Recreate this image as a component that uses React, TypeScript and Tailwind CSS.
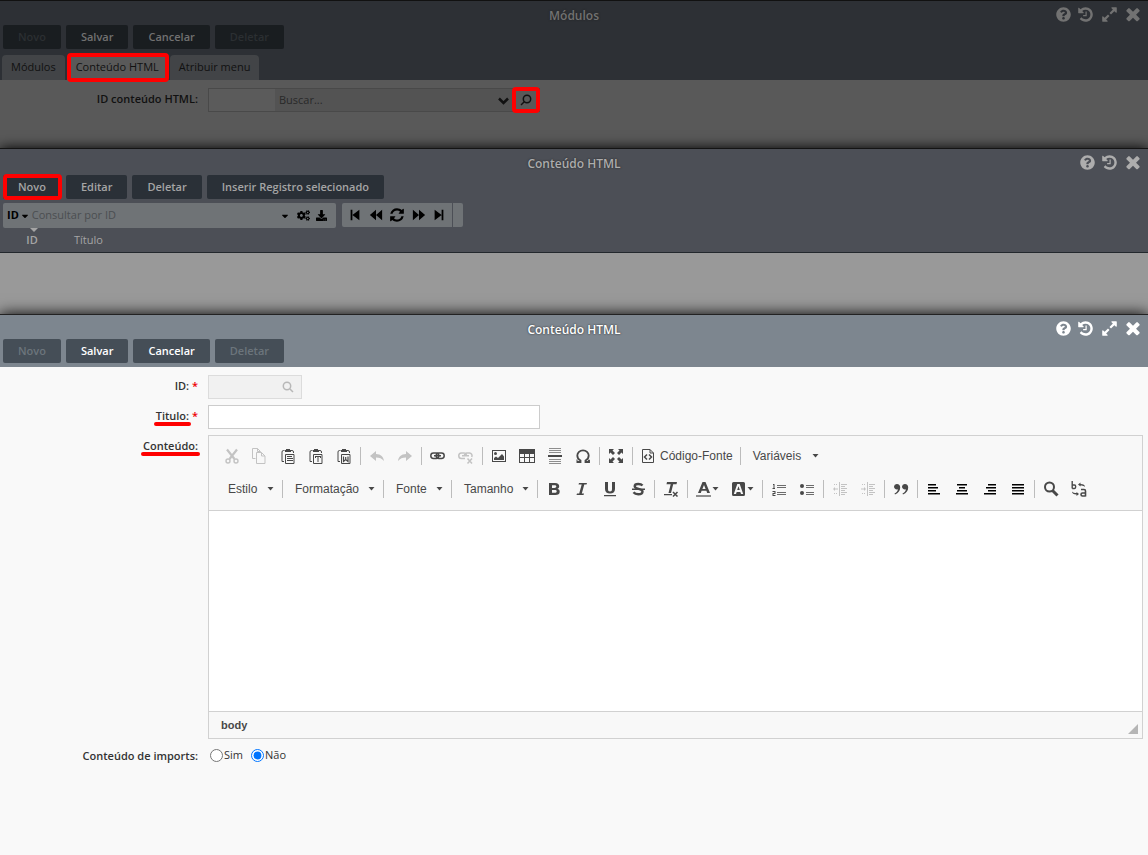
import type { ReactNode } from "react";
import { FaCogs, FaDownload, FaQuestionCircle, FaCaretDown } from "react-icons/fa";

type IconProps = {
  children: ReactNode;
  className?: string;
};

function Icon({ children, className = "" }: IconProps) {
  return (
    <svg
      viewBox="0 0 16 16"
      width="16"
      height="16"
      fill="currentColor"
      aria-hidden="true"
      className={"shrink-0 " + className}
    >
      {children}
    </svg>
  );
}

function WindowIcon({ d, className }: { d: string; className?: string }) {
  return (
    <svg
      viewBox="0 0 1792 1792"
      fill="currentColor"
      aria-hidden="true"
      className={className || "size-4"}
    >
      <path d={d} />
    </svg>
  );
}

const HISTORY =
  "M1664 896q0 156-61 298t-164 245-245 164-298 61q-172 0-327-72.5t-264-204.5q-7-10-6.5-22.5t8.5-20.5l137-138q10-9 25-9 16 2 23 12 73 95 179 147t225 52q104 0 198.5-40.5t163.5-109.5 109.5-163.5 40.5-198.5-40.5-198.5-109.5-163.5-163.5-109.5-198.5-40.5q-98 0-188 35.5t-160 101.5l137 138q31 30 14 69-17 40-59 40h-448q-26 0-45-19t-19-45v-448q0-42 40-59 39-17 69 14l130 129q107-101 244.5-156.5t284.5-55.5q156 0 298 61t245 164 164 245 61 298zm-640-288v448q0 14-9 23t-23 9h-320q-14 0-23-9t-9-23v-64q0-14 9-23t23-9h224v-352q0-14 9-23t23-9h64q14 0 23 9t9 23z";
const EXPAND =
  "M883 1056q0 13-10 23l-332 332 144 144q19 19 19 45t-19 45-45 19h-448q-26 0-45-19t-19-45v-448q0-26 19-45t45-19 45 19l144 144 332-332q10-10 23-10t23 10l114 114q10 10 10 23zm781-864v448q0 26-19 45t-45 19-45-19l-144-144-332 332q-10 10-23 10t-23-10l-114-114q-10-10-10-23t10-23l332-332-144-144q-19-19-19-45t19-45 45-19h448q26 0 45 19t19 45z";
const CLOSE =
  "M1490 1322q0 40-28 68l-136 136q-28 28-68 28t-68-28l-294-294-294 294q-28 28-68 28t-68-28l-136-136q-28-28-28-68t28-68l294-294-294-294q-28-28-28-68t28-68l136-136q28-28 68-28t68 28l294 294 294-294q28-28 68-28t68 28l136 136q28 28 28 68t-28 68l-294 294 294 294q28 28 28 68z";
const REFRESH =
  "M1639 1056q0 5-1 7-64 268-268 434.5t-478 166.5q-146 0-282.5-55t-243.5-157l-129 129q-19 19-45 19t-45-19-19-45v-448q0-26 19-45t45-19h448q26 0 45 19t19 45-19 45l-137 137q71 66 161 102t187 36q134 0 250-65t186-179q11-17 53-117 8-23 30-23h192q13 0 22.5 9.5t9.5 22.5zm25-800v448q0 26-19 45t-45 19h-448q-26 0-45-19t-19-45 19-45l138-138q-148-137-349-137-134 0-250 65t-186 179q-11 17-53 117-8 23-30 23h-199q-13 0-22.5-9.5t-9.5-22.5v-7q65-268 270-434.5t480-166.5q146 0 284 55.5t245 156.5l130-129q19-19 45-19t45 19 19 45z";

// red frame drawn around a highlighted control
function Highlight({ inset }: { inset: string }) {
  return (
    <span
      className={"pointer-events-none absolute z-10 rounded-sm border-4 border-[#ff0000] " + inset}
    />
  );
}

type TitleBarProps = {
  title: string;
  expand?: boolean;
  color: string;
};

function TitleBar({ title, expand = true, color }: TitleBarProps) {
  return (
    <div className={"grid h-6 grid-cols-[1fr_auto_1fr] items-end " + color}>
      <h2 className="col-start-2 text-xs leading-[18px] font-semibold [text-shadow:0_0_2px_#222]">
        {title}
      </h2>
      <div className="flex h-[22px] items-center justify-end pr-[5px]">
        <button type="button" aria-label="Ajuda" className="pr-[6px]">
          <FaQuestionCircle className="size-[15px]" />
        </button>
        <button type="button" aria-label="Histórico">
          <WindowIcon d={HISTORY} className="size-[17px]" />
        </button>
        {expand && (
          <button type="button" aria-label="Expandir" className="pl-[7px]">
            <WindowIcon d={EXPAND} className="size-[17px]" />
          </button>
        )}
        <button type="button" aria-label="Fechar" className="pl-[5px]">
          <WindowIcon d={CLOSE} className="size-5" />
        </button>
      </div>
    </div>
  );
}

type ActionProps = {
  children: ReactNode;
  tone: string;
  disabled?: boolean;
  marked?: boolean;
};

function Action({ children, tone, disabled, marked }: ActionProps) {
  return (
    <button
      type="button"
      disabled={disabled}
      className={"relative h-6 rounded-xs px-[15px] text-[11px] leading-6 font-semibold " + tone}
    >
      {children}
      {marked && <Highlight inset="-right-px left-0 -inset-y-px" />}
    </button>
  );
}

type ToolProps = {
  label: string;
  children: ReactNode;
  disabled?: boolean;
  arrow?: boolean;
  black?: boolean;
};

function Tool({ label, children, disabled, arrow, black }: ToolProps) {
  let color = "text-[#484848]";
  if (disabled) color = "text-[#c3c3c3]";
  if (black) color = "text-black";

  return (
    <button
      type="button"
      aria-label={label}
      disabled={disabled}
      className={"flex h-7 items-center px-[6px] " + color}
    >
      <Icon>{children}</Icon>
      {arrow && <Arrow />}
    </button>
  );
}

function Arrow() {
  return (
    <svg viewBox="0 0 7 4" width="7" height="4" fill="#484848" aria-hidden="true">
      <path d="M.5 0h6L3.500 3.500z" />
    </svg>
  );
}

function Combo({ label, width }: { label: string; width: string }) {
  return (
    <button
      type="button"
      className={"flex h-7 items-center justify-between pr-[6px] pl-[10px] text-[#484848] " + width}
    >
      {label}
      <Arrow />
    </button>
  );
}

function Sep() {
  return <span className="mx-[2px] h-[18px] w-px bg-[#bcbcbc]" />;
}

function Clipboard({ children }: { children: ReactNode }) {
  return (
    <>
      <path d="M4.500 2.500h-1a1.500 1.500 0 0 0-1.500 1.500v9.500h2M11 2.500h1a1.500 1.500 0 0 1 1.500 1.500v1" fill="none" stroke="currentColor" />
      <path d="M5 2h1V1h4v1h1v2H5z" />
      <path d="M5.500 6.500h8.500v9H5.500z" fill="none" stroke="currentColor" />
      {children}
    </>
  );
}

function Editor() {
  return (
    <div className="min-w-0 flex-1 border border-[#d1d1d1] bg-white font-['Liberation_Sans',Arial,sans-serif] text-xs">
      <div className="border-b border-[#d1d1d1] bg-[#f8f8f8] pt-[6px] pb-[7px] pl-[9px]">
        <div className="mb-[5px] flex flex-wrap items-center">
          <Tool label="Recortar" disabled>
            <path d="M3 1.500 10.500 11M13 1.500 5.500 11" stroke="currentColor" strokeWidth="2.200" />
            <circle cx="4" cy="13" r="2" fill="none" stroke="currentColor" strokeWidth="1.400" />
            <circle cx="12" cy="13" r="2" fill="none" stroke="currentColor" strokeWidth="1.400" />
          </Tool>
          <Tool label="Copiar" disabled>
            <path d="M3.500 10.500h-3v-10h5l3 3M5.500.5v3h3M4.500 4.500h5l3.500 3.500v7.500H4.500zM9.500 4.500V8H13" fill="none" stroke="currentColor" />
          </Tool>
          <Tool label="Colar">
            <Clipboard>
              <path d="M7 8h5v1H7zM7 10h6v1H7zM7 12h6v1H7z" />
            </Clipboard>
          </Tool>
          <Tool label="Colar como texto sem formatação">
            <Clipboard>
              <path d="M7 8h6v2h-1V9h-1.500v5h-1V9H8v1H7z" />
            </Clipboard>
          </Tool>
          <Tool label="Colar do Word">
            <Clipboard>
              <path d="M7.500 8.500v5l2.200-2 2.300 2v-5M9.700 9v3" fill="none" stroke="currentColor" strokeWidth="1.200" />
            </Clipboard>
          </Tool>
          <Sep />
          <Tool label="Desfazer" disabled>
            <path d="M7 3v3c5 0 7.500 3 8 7-2-2.500-4.500-3.500-8-3.500V13L1 8z" />
          </Tool>
          <Tool label="Refazer" disabled>
            <path d="M9 3v3c-5 0-7.500 3-8 7 2-2.500 4.500-3.500 8-3.500V13l6-5z" />
          </Tool>
          <Sep />
          <Tool label="Inserir link">
            <g fill="none" stroke="currentColor" strokeWidth="1.500">
              <rect x="0.800" y="5" width="8" height="5.500" rx="2.700" />
              <rect x="6.200" y="5" width="8" height="5.500" rx="2.700" />
              <path d="M4 7.750h7" />
            </g>
          </Tool>
          <Tool label="Remover link" disabled>
            <g fill="none" stroke="currentColor" strokeWidth="1.500">
              <path d="M7 10.500H3.500a2.700 2.700 0 0 1 0-5.500H6a2.500 2.500 0 0 1 2.500 2M6.500 7.750A2.700 2.700 0 0 1 9 5h2.500a2.700 2.700 0 0 1 2.200 4M4 7.750h7" />
              <path d="m9.500 10.500 4.500 5M14 10.500l-4.500 5" />
            </g>
          </Tool>
          <Sep />
          <Tool label="Imagem">
            <path fillRule="evenodd" d="M1 2h14v12H1zM2 3v10h12V3z" />
            <circle cx="4.500" cy="5.500" r="1.500" />
            <path d="m3 12v-2l2-1.500 2 1.500 4-4 2 2.500V12z" />
          </Tool>
          <Tool label="Tabela">
            <path fillRule="evenodd" d="M0 1h16v14H0zM1 6v3h4V6zM6 6v3h4V6zM11 6v3h4V6zM1 10v4h4v-4zM6 10v4h4v-4zM11 10v4h4v-4z" />
          </Tool>
          <Tool label="Linha horizontal">
            <path d="M2 0h12v1H2zM2 2h12v1H2zM2 4h12v1H2zM2 11h12v1H2zM2 13h12v1H2zM2 15h12v1H2z" opacity=".6" />
            <path d="M1 7h14v2H1z" />
          </Tool>
          <Tool label="Caractere especial">
            <path d="M2 14h3.500v-1.500C3.500 11.500 2.300 9.600 2.300 7.500a5.700 5.200 0 0 1 11.400 0c0 2.100-1.200 4-3.200 5V14H14v-2" fill="none" stroke="currentColor" strokeWidth="1.800" />
            <path d="M1.500 11.500h1V15h-1zM13.500 11.500h1V15h-1z" />
          </Tool>
          <Sep />
          <Tool label="Maximizar">
            <path d="M1 1h5L4.500 2.500 7 5 5 7 2.500 4.500 1 6zM15 1h-5l1.500 1.500L9 5l2 2 2.500-2.500L15 6zM1 15h5l-1.500-1.500L7 11 5 9l-2.500 2.500L1 10zM15 15h-5l1.500-1.500L9 11l2-2 2.500 2.500L15 10z" />
          </Tool>
          <Sep />
          <button type="button" className="flex h-7 items-center gap-1 px-[5px] text-[#484848]">
            <Icon>
              <path d="M2.500 1.500h7.500l3.500 3.500v9.500h-11zM10 1.500V5h3.500" fill="none" stroke="currentColor" />
              <path d="M7 6.500 4.500 9l2.500 2.500M9 6.500 11.500 9 9 11.500" fill="none" stroke="currentColor" strokeWidth="1.500" />
            </Icon>
            Código-Fonte
          </button>
          <Sep />
          <Combo label="Variáveis" width="w-[82px]" />
        </div>

        <div className="flex flex-wrap items-center">
          <Combo label="Estilo" width="w-[62px]" />
          <Sep />
          <Combo label="Formatação" width="w-24" />
          <Sep />
          <Combo label="Fonte" width="w-[63px]" />
          <Sep />
          <Combo label="Tamanho" width="w-[81px]" />
          <Sep />
          <Tool label="Negrito">
            <path fillRule="evenodd" d="M3 2h6c3 0 4.200 1.300 4.200 3.200 0 1.300-.7 2.200-1.800 2.600 1.500.4 2.300 1.400 2.300 2.900 0 2.100-1.500 3.300-4.400 3.300H3zM6 4.200V7h2.300c1.300 0 2-.5 2-1.400s-.7-1.400-2-1.400zM6 9v2.800h2.700c1.300 0 2-.5 2-1.400S10 9 8.700 9z" />
          </Tool>
          <Tool label="Itálico">
            <path d="M5 2h8l-.5 1.500h-2.200L7.800 12.500h2.200L9.500 14H2.500l.5-1.500h2.200L7.700 3.500H4.500z" />
          </Tool>
          <Tool label="Sublinhado">
            <path d="M3 1h3v7c0 1.800.7 2.500 2 2.500s2-.7 2-2.500V1h3v7c0 3-2 4.500-5 4.500S3 11 3 8zM2 14h12v1.200H2z" />
          </Tool>
          <Tool label="Tachado">
            <path d="M12.500 4.500C11.500 3.300 10 3 8.200 3 6 3 4.700 3.800 4.700 5.200c0 3.600 7.800 1.600 7.800 5.300 0 1.700-1.700 2.700-4.200 2.700-2 0-3.700-.6-4.800-2" fill="none" stroke="currentColor" strokeWidth="2.400" />
            <path d="M2 7.500h13V9H2z" />
          </Tool>
          <Sep />
          <Tool label="Remover formatação">
            <path d="M4 1h10l-.5 2.200h-3.300L8 12H5.500l2.200-8.800H3.500zM1 13h8v1.200H1z" />
            <path d="m10 11 4.500 4.500M14.500 11 10 15.500" stroke="currentColor" strokeWidth="1.500" />
          </Tool>
          <Sep />
          <Tool label="Cor do texto" arrow>
            <path fillRule="evenodd" d="M6.500 1h3L14 12h-2.800l-.8-2.200H5.600L4.800 12H2zM8 4 6.400 8h3.200z" />
            <path d="M0 14h15v2H0z" opacity=".6" />
          </Tool>
          <Tool label="Cor do fundo" arrow>
            <path fillRule="evenodd" d="M2.500 1h10A1.500 1.500 0 0 1 14 2.500v11a1.500 1.500 0 0 1-1.500 1.500h-10A1.500 1.500 0 0 1 1 13.500v-11A1.500 1.500 0 0 1 2.500 1zM6.300 3 2.800 13h2.200l.7-2h3.600l.7 2h2.200L8.700 3zM7.500 5.200 8.800 9H6.200z" />
          </Tool>
          <Sep />
          <Tool label="Lista numerada">
            <path d="M6 4h9v1H6zM6 6h9v1H6zM6 11h9v1H6zM6 13h9v1H6z" opacity=".8" />
            <path d="M2 3h1.500v4H4v1H1.500V7h1V4H2zM1.500 10H4.500v3h-2v1h2v1h-3v-3h2v-1h-2z" />
          </Tool>
          <Tool label="Lista sem números">
            <circle cx="3" cy="5" r="2" />
            <circle cx="3" cy="12" r="2" />
            <path d="M7 4h8v1H7zM7 6h8v1H7zM7 11h8v1H7zM7 13h8v1H7z" opacity=".8" />
          </Tool>
          <Sep />
          <Tool label="Diminuir recuo" disabled>
            <path d="M7 1h1v14H7zM9 3h6v1H9zM9 5h4v1H9zM9 7h6v1H9zM9 9h4v1H9zM9 11h6v1H9zM9 13h4v1H9zM2 3h1v1H2zM4 3h1v1H4zM2 12h1v1H2zM4 12h1v1H4zM1 8l2-2v1.500h3v1H3V10z" />
          </Tool>
          <Tool label="Aumentar recuo" disabled>
            <path d="M7 1h1v14H7zM9 3h6v1H9zM9 5h4v1H9zM9 7h6v1H9zM9 9h4v1H9zM9 11h6v1H9zM9 13h4v1H9zM2 3h1v1H2zM4 3h1v1H4zM2 12h1v1H2zM4 12h1v1H4zM6 8 4 6v1.500H1v1h3V10z" />
          </Tool>
          <Sep />
          <Tool label="Citação">
            <path d="M1 5.500A2.800 2.800 0 0 1 4 3c2 0 3.200 1.300 3.200 3.500C7.200 9.500 5.500 12 2 13.500l-.5-1C3.500 11.500 4.700 10.200 5 8.300 2.800 9 1 7.500 1 5.500zM9 5.500A2.800 2.800 0 0 1 12 3c2 0 3.200 1.300 3.200 3.500 0 3-1.700 5.500-5.200 7l-.5-1c2-1 3.200-2.300 3.500-4.200-2.200.7-4-.8-4-2.800z" />
          </Tool>
          <Sep />
          <Tool label="Alinhar à esquerda" black>
            <path d="M2 3h8v1.600H2zM2 6h10v1.600H2zM2 9h8v1.600H2zM2 12h12v1.600H2z" />
          </Tool>
          <Tool label="Centralizar" black>
            <path d="M3 3h10v1.600H3zM5 6h6v1.600H5zM3 9h10v1.600H3zM2 12h12v1.600H2z" />
          </Tool>
          <Tool label="Alinhar à direita" black>
            <path d="M6 3h8v1.600H6zM4 6h10v1.600H4zM6 9h8v1.600H6zM2 12h12v1.600H2z" />
          </Tool>
          <Tool label="Justificado" black>
            <path d="M2 3h12v1.600H2zM2 6h12v1.600H2zM2 9h12v1.600H2zM2 12h12v1.600H2z" />
          </Tool>
          <Sep />
          <Tool label="Localizar">
            <circle cx="6.500" cy="6" r="4.500" fill="none" stroke="currentColor" strokeWidth="2" />
            <path d="m9.500 9.500 5 5" stroke="currentColor" strokeWidth="3" />
          </Tool>
          <Tool label="Substituir">
            <path d="M1.200 0v7.500M1.200 4h2.300q1.200 0 1.200 1.700T3.500 7.500H1.200" fill="none" stroke="currentColor" strokeWidth="1.400" />
            <path d="M10 8.500h3q1.500 0 1.500 1.500v5.500M14.500 12h-3q-1.500 0-1.500 1.500t1.500 1.500h3" fill="none" stroke="currentColor" strokeWidth="1.600" />
            <path d="m7 3.500 2.500-2V3c3 0 4.500 1 4.500 3-1-1-2.500-1.500-4.500-1.500v1zM8 13l-2.500 2v-1.500C2.500 13.500 1 12.500 1 10.500 2 11.500 3.500 12 5.500 12v-1z" />
          </Tool>
        </div>
      </div>

      <textarea
        id="conteudo"
        className="block h-[200px] w-full resize-none p-5 outline-none"
      />

      <div className="flex h-[27px] items-center justify-between border-t border-[#d1d1d1] bg-[#f8f8f8] pl-3 text-[11px] font-bold text-[#484848]">
        body
        <svg viewBox="0 0 10 10" className="mr-1 mb-1 size-[10px] self-end" fill="#b5b5b5" aria-hidden="true">
          <path d="M10 0v10H0z" />
        </svg>
      </div>
    </div>
  );
}

const labelClass =
  "w-[198px] shrink-0 text-right text-[11px] leading-[22px] font-semibold";

export default function App() {
  return (
    <div className="flex min-h-screen flex-col overflow-x-hidden font-['Open_Sans','Noto_Sans',sans-serif] text-[11px] text-[#333]">
      <section className="border-t border-[#111] bg-[#595959]">
        <header className="flex h-[79px] flex-col bg-[#2d3035]">
          <TitleBar title="Módulos" color="text-[#727272]" />
          <div className="flex gap-[5px] pl-[3px]">
            <Action tone="bg-[#191d20] text-[#2b2f32]" disabled>Novo</Action>
            <Action tone="bg-[#191d20] text-[#717171]">Salvar</Action>
            <Action tone="bg-[#191d20] text-[#717171]">Cancelar</Action>
            <Action tone="bg-[#191d20] text-[#2b2f32]" disabled>Deletar</Action>
          </div>
          <nav className="mt-auto flex gap-[2px] pl-[2px] text-[#111]">
            <button type="button" className="h-[25px] rounded-t-sm bg-[#424447] px-[9px]">
              Módulos
            </button>
            <button type="button" className="relative h-[25px] rounded-t-sm bg-[#595959] px-[9px]">
              Conteúdo HTML
              <Highlight inset="-right-px left-0 -inset-y-[2px]" />
            </button>
            <button type="button" className="h-[25px] rounded-t-sm bg-[#424447] px-[9px]">
              Atribuir menu
            </button>
          </nav>
        </header>
        <div className="flex h-[68px] gap-[10px] pt-2">
          <label htmlFor="id-conteudo" className={labelClass + " text-[#111]"}>
            ID conteúdo HTML:
          </label>
          <div className="flex h-6 w-[332px] border border-[#494949] text-[#282828]">
            <input id="id-conteudo" className="w-[66px] bg-[#5b5b5b] outline-none" />
            <input
              aria-label="Buscar"
              placeholder="Buscar..."
              className="min-w-0 flex-1 bg-[#535353] pl-1 outline-none placeholder:text-[#292929]"
            />
            <button type="button" aria-label="Abrir lista" className="bg-[#535353] pr-1 text-[#111]">
              <svg viewBox="0 0 11 11" className="size-[11px]" fill="none" stroke="currentColor" strokeWidth="2.500" aria-hidden="true">
                <path d="m1 3.500 4.500 4.500L10 3.500" />
              </svg>
            </button>
            <button type="button" aria-label="Pesquisar" className="relative flex w-[26px] items-center justify-center text-[#111]">
              <svg viewBox="0 0 12 12" className="size-3" fill="none" stroke="currentColor" strokeWidth="1.500" aria-hidden="true">
                <circle cx="7" cy="5" r="3.700" />
                <path d="M4.500 7.500 1 11" />
              </svg>
              <Highlight inset="-inset-x-px -inset-y-[2px]" />
            </button>
          </div>
        </div>
      </section>

      <section className="relative border-t border-[#141414] bg-[#999] shadow-[0_0_12px_#000]">
        <header className="h-[104px] border-b border-[#23282d] bg-[#4c4f56]">
          <TitleBar title="Conteúdo HTML" expand={false} color="text-[#adadad]" />
          <div className="mt-[2px] flex gap-[5px] pl-[3px]">
            <Action tone="bg-[#2a3037] text-[#a5a5a5]" marked>Novo</Action>
            <Action tone="bg-[#2a3037] text-[#a5a5a5]">Editar</Action>
            <Action tone="bg-[#2a3037] text-[#a5a5a5]">Deletar</Action>
            <Action tone="bg-[#2a3037] text-[#a5a5a5]">Inserir Registro selecionado</Action>
          </div>
          <div className="mt-1 flex gap-[6px] pl-[3px] text-black">
            <div className="flex h-[25px] w-[333px] items-center rounded-xs bg-[#6f7376] pr-[9px] pl-1">
              <button type="button" className="flex items-center gap-px font-bold">
                ID <FaCaretDown className="size-[10px]" />
              </button>
              <input
                aria-label="Consultar por ID"
                placeholder="Consultar por ID"
                className="ml-[2px] min-w-0 flex-1 bg-transparent outline-none placeholder:text-[#4b4e51]"
              />
              <button type="button" aria-label="Opções de consulta">
                <FaCaretDown className="size-[10px]" />
              </button>
              <button type="button" aria-label="Configurar" className="ml-[7px]">
                <FaCogs className="size-[13px]" />
              </button>
              <button type="button" aria-label="Exportar" className="ml-[6px]">
                <FaDownload className="size-[11px]" />
              </button>
            </div>
            <div className="flex gap-px">
              <div className="flex h-6 w-[110px] items-center justify-between rounded-l-xs bg-[#6f7376] px-[6px]">
                <button type="button" aria-label="Primeiro">
                  <Icon className="size-[14px]"><path d="M3 2h2v12H3zM13 2v12L5 8z" /></Icon>
                </button>
                <button type="button" aria-label="Anterior">
                  <Icon className="size-[14px]"><path d="M8 2v12L1 8zM15 2v12L8 8z" /></Icon>
                </button>
                <button type="button" aria-label="Atualizar">
                  <WindowIcon d={REFRESH} className="size-4" />
                </button>
                <button type="button" aria-label="Próximo">
                  <Icon className="size-[14px]"><path d="M8 2v12l7-6zM1 2v12l7-6z" /></Icon>
                </button>
                <button type="button" aria-label="Último">
                  <Icon className="size-[14px]"><path d="M11 2h2v12h-2zM3 2v12l8-6z" /></Icon>
                </button>
              </div>
              <div className="h-6 w-[10px] rounded-r-xs bg-[#6f7376]" />
            </div>
          </div>
          <table className="text-[#a5a5a5]">
            <thead>
              <tr className="h-6 text-left font-normal">
                <th className="relative w-[64px] text-center font-semibold">
                  <svg viewBox="0 0 8 4" className="absolute top-0 left-[30px] h-1 w-2" fill="#a5a5a5" aria-hidden="true">
                    <path d="M0 0h8L4 4z" />
                  </svg>
                  ID
                </th>
                <th className="pl-[10px] font-normal">Título</th>
              </tr>
            </thead>
          </table>
        </header>
        <div className="h-[61px]" />
      </section>

      <section className="relative flex-1 border-t border-[#222] bg-[#f9f9f9] shadow-[0_0_14px_#000]">
        <header className="h-[52px] bg-[#7d868f]">
          <TitleBar title="Conteúdo HTML" color="text-white" />
          <div className="flex gap-[5px] pl-[3px]">
            <Action tone="bg-[#454e57] text-[#6c757c]" disabled>Novo</Action>
            <Action tone="bg-[#454e57] text-white">Salvar</Action>
            <Action tone="bg-[#454e57] text-white">Cancelar</Action>
            <Action tone="bg-[#454e57] text-[#6c757c]" disabled>Deletar</Action>
          </div>
        </header>
        <form className="flex flex-col gap-[6px] pt-2 pr-[5px]">
          <div className="flex gap-[10px]">
            <label htmlFor="registro-id" className={labelClass}>
              ID: <span className="text-[#e00]">*</span>
            </label>
            <div className="flex h-6 w-[94px] items-center border border-[#dcdcdc] bg-[#f1f1f1]">
              <input id="registro-id" disabled className="min-w-0 flex-1" />
              <svg viewBox="0 0 12 12" className="mr-[7px] size-3" fill="none" stroke="#b8b8b8" strokeWidth="1.500" aria-hidden="true">
                <circle cx="5" cy="5" r="3.700" />
                <path d="m8 8 3 3" />
              </svg>
            </div>
          </div>
          <div className="flex gap-[10px]">
            <label htmlFor="titulo" className={labelClass}>
              <span className="relative">
                Titulo:
                <span className="absolute -inset-x-[2px] -bottom-[3px] h-1 rounded-full bg-[#ff0000]" />
              </span>{" "}
              <span className="text-[#e00]">*</span>
            </label>
            <input id="titulo" className="h-6 w-[332px] border border-[#ccc] bg-white px-1 outline-none" />
          </div>
          <div className="flex gap-[10px]">
            <label htmlFor="conteudo" className={labelClass}>
              <span className="relative">
                Conteúdo:
                <span className="absolute -inset-x-[2px] -bottom-[3px] h-1 rounded-full bg-[#ff0000]" />
              </span>
            </label>
            <Editor />
          </div>
          <fieldset className="flex gap-[10px]">
            <legend className={labelClass + " float-left"}>Conteúdo de imports:</legend>
            <div className="flex h-5 gap-2 pl-[2px]">
              <label className="flex items-center gap-px">
                <input type="radio" name="imports" className="size-[13px]" />
                Sim
              </label>
              <label className="flex items-center gap-px">
                <input type="radio" name="imports" defaultChecked className="size-[13px]" />
                Não
              </label>
            </div>
          </fieldset>
        </form>
      </section>
    </div>
  );
}
